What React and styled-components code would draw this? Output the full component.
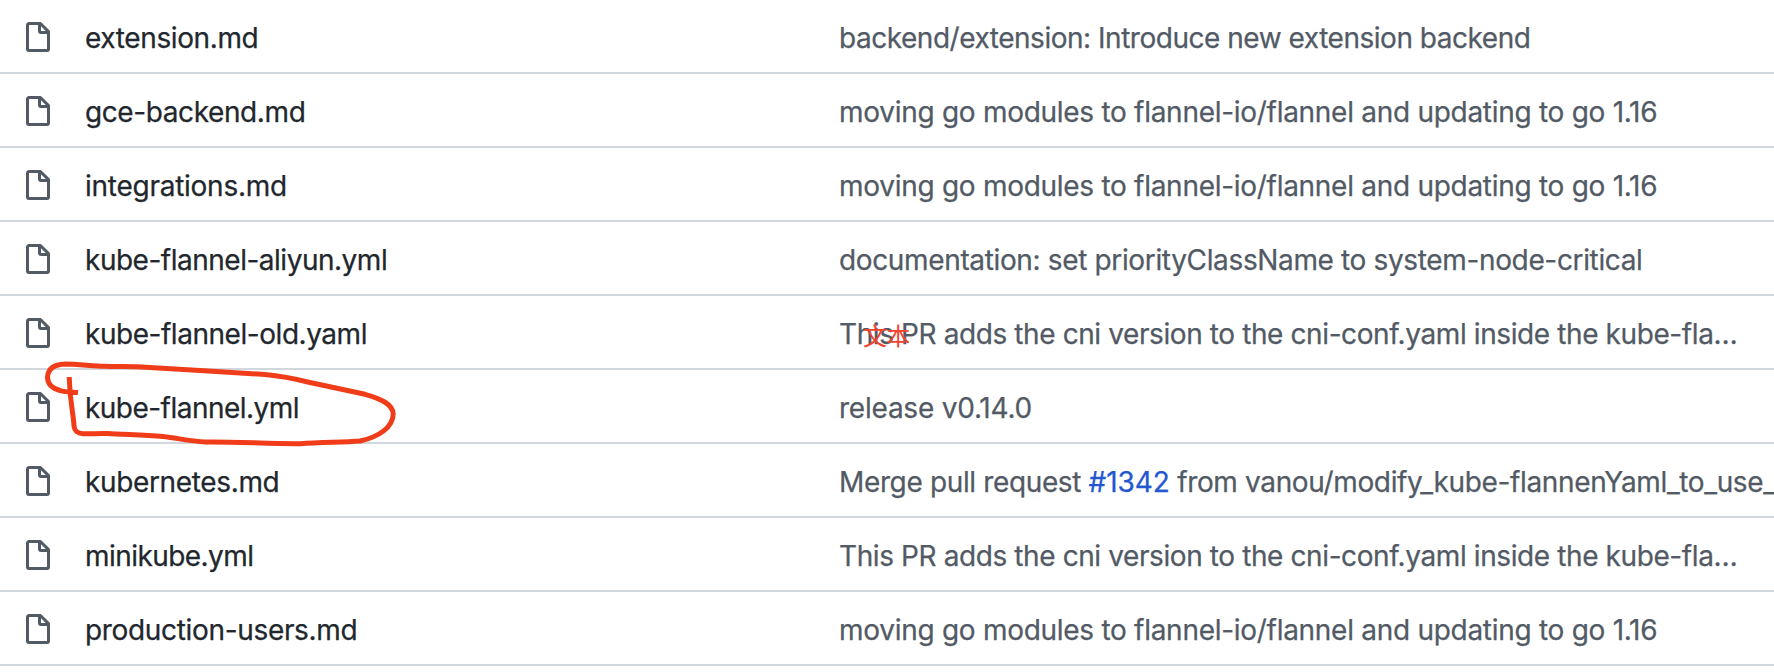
import React from "react";
import styled, { createGlobalStyle } from "styled-components";

const Global = createGlobalStyle`
  body { margin: 0; background: #fff; overflow: hidden; }
  * { box-sizing: border-box; }
`;
const List = styled.main`
  position: relative;
  width: 1774px;
  height: 672px;
  overflow: hidden;
  font: 400 28px/42px Inter, "Noto Sans CJK SC", sans-serif;
`;
const Row = styled.div`
  display: grid;
  grid-template-columns: 85px 754px 1fr;
  align-items: center;
  height: 74px;
  padding-top: 2px;
  border-bottom: 2px solid #d2d7de;
`;
const FileIcon = styled.svg`
  width: 24px;
  height: 30px;
  margin-left: 26px;
  fill: none;
  stroke: #525a65;
  stroke-width: 3;
  stroke-linejoin: round;
`;
const Label = styled.span`
  padding-top: 2px;
  white-space: nowrap;
  letter-spacing: ${({ $tracking }) => $tracking}px;
  -webkit-text-stroke: 0.25px currentColor;
`;
const Name = styled(Label)`
  color: #22272d;
`;
const Message = styled(Label)`
  color: #525a65;
`;
const Issue = styled.a`
  color: #2257d0;
  letter-spacing: -0.1px;
`;
const Ink = styled.svg`
  position: absolute;
  left: 40px;
  top: 356px;
  width: 364px;
  height: 96px;
  fill: none;
  stroke: #f03c19;
  stroke-width: 5;
  stroke-linejoin: round;
`;
const Note = styled.span`
  position: absolute;
  left: 863px;
  top: 323px;
  color: #f4432f;
  font: 400 24px/24px "Noto Sans CJK SC", sans-serif;
  letter-spacing: -0.8px;
`;

const rows = [
  ["extension.md", -0.38, "backend/extension: Introduce new extension backend", -0.475],
  ["gce-backend.md", -0.4, "moving go modules to flannel-io/flannel and updating to go 1.16", -0.283],
  ["integrations.md", -0.26, "moving go modules to flannel-io/flannel and updating to go 1.16", -0.283],
  ["kube-flannel-aliyun.yml", -0.49, "documentation: set priorityClassName to system-node-critical", -0.355],
  ["kube-flannel-old.yaml", -0.46, "This PR adds the cni version to the cni-conf.yaml inside the kube-fla…", -0.4],
  ["kube-flannel.yml", -0.53, "release v0.14.0", -0.226],
  ["kubernetes.md", -0.35, <>Merge pull request <Issue>#1342</Issue> from vanou/modify_kube-flannenYaml_to_use_</>, -0.36],
  ["minikube.yml", -0.56, "This PR adds the cni version to the cni-conf.yaml inside the kube-fla…", -0.4],
  ["production-users.md", -0.33, "moving go modules to flannel-io/flannel and updating to go 1.16", -0.283],
];

export default function App() {
  return (
    <List>
      <Global />
      {rows.map(([name, nameTracking, message, messageTracking]) => (
        <Row key={name}>
          <FileIcon viewBox="0 0 24 30">
            <path d="M3 1.5H14.4L22.5 9.6V27a1.5 1.5 0 0 1-1.5 1.5H3A1.5 1.5 0 0 1 1.5 27V3A1.5 1.5 0 0 1 3 1.5Z" />
            <path d="M13.5 1.5V9A1.5 1.5 0 0 0 15 10.5H22.5" />
          </FileIcon>
          <Name $tracking={nameTracking}>{name}</Name>
          <Message $tracking={messageTracking}>{message}</Message>
        </Row>
      ))}
      <Note>文本</Note>
      <Ink viewBox="40 356 364 96">
        <path d="M78 392.5C72 392 66 392.5 60 390.5C51 388 47.5 383 47.5 377C48 369 54 364.5 65 364C78 364 92 366 105 366.3C116 366.7 126 366.2 137 366.7L200 370.5L265 374.5C282 376 296 379 310 382.5L365 394.3C382 399 393 404.5 393.2 414C393 427 379 437 360 441C343 442.5 323 442 300 443.7C270 444 235 441.5 205 442C189 441 177 438 163 436.5C144 434.5 125 434.7 107 433.5C98 433.3 91 434 83 433.8C77 433.3 74.5 431 74 426C73.5 413 70 405 69.2 377" />
      </Ink>
    </List>
  );
}
